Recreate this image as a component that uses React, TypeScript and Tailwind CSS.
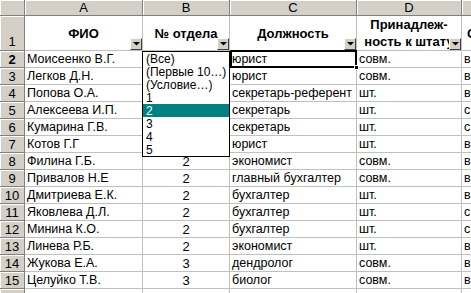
import React from 'react';

// rows 2..15; the № отдела values of rows 2-7 lie under the open filter list
const ROWS: [string, string, string, string, string][] = [
  ['Моисеенко В.Г.', '', 'юрист', 'совм.', 'в'],
  ['Легков Д.Н.', '', 'юрист', 'совм.', 'в'],
  ['Попова О.А.', '', 'секретарь-референт', 'шт.', 'в'],
  ['Алексеева И.П.', '', 'секретарь', 'шт.', 'с'],
  ['Кумарина Г.В.', '', 'секретарь', 'шт.', 'с'],
  ['Котов Г.Г', '', 'юрист', 'шт.', 'в'],
  ['Филина Г.Б.', '2', 'экономист', 'совм.', 'в'],
  ['Привалов Н.Е', '2', 'главный бухгалтер', 'совм.', 'в'],
  ['Дмитриева Е.К.', '2', 'бухгалтер', 'шт.', 'в'],
  ['Яковлева Д.Л.', '2', 'бухгалтер', 'шт.', 'с'],
  ['Минина К.О.', '2', 'бухгалтер', 'шт.', 'с'],
  ['Линева Р.Б.', '2', 'экономист', 'шт.', 'в'],
  ['Жукова Е.А.', '3', 'дендролог', 'совм.', 'в'],
  ['Целуйко Т.В.', '3', 'биолог', 'совм.', 'в'],
];

const FILTER_ITEMS = ['(Все)', '(Первые 10…)', '(Условие…)', '1', '2', '3', '4', '5'];

const head = 'bg-[#d4d0c8] border-r border-b border-[#808080] shadow-[inset_1px_1px_0_#fff] flex items-center justify-center text-[13px]';
const cell = 'border-r border-b border-[#c0c0c0] flex items-center pl-[2px] whitespace-nowrap overflow-hidden text-[12.5px]';

const FilterButton = () => (
  <div className="absolute right-0 bottom-0 w-[12px] h-[12px] bg-[#d4d0c8] border-t border-l border-t-white border-l-white border-r border-b border-r-[#404040] border-b-[#404040] flex items-center justify-center">
    <svg width="7" height="4" viewBox="0 0 7 4">
      <path d="M0 0h7L3.5 3.5z" fill="#000" />
    </svg>
  </div>
);

export default function App() {
  return (
    <div className="relative w-[471px] h-[293px] overflow-hidden bg-white text-black leading-none" style={{ fontFamily: '"Liberation Sans", Arial, sans-serif' }}>
      <div className="grid grid-cols-[25px_118px_87px_127px_105px_80px] grid-rows-[16px_35px_repeat(15,17px)]">
        {/* column letters */}
        <div className={head} />
        {['A', 'B', 'C', 'D', 'E'].map((l) => (
          <div key={l} className={head}>{l}</div>
        ))}

        {/* row 1: headers */}
        <div className={`${head} !items-end pb-[2px]`}>1</div>
        <div className={`${cell} relative justify-center font-bold !pl-0 !text-[13px]`}>
          ФИО
          <FilterButton />
        </div>
        <div className={`${cell} relative justify-center font-bold !pl-0 !text-[13px]`}>
          № отдела
          <FilterButton />
        </div>
        <div className={`${cell} relative justify-center font-bold !pl-0 !text-[13px]`}>
          Должность
          <FilterButton />
        </div>
        <div className={`${cell} relative justify-center font-bold !pl-0 !text-[13px] text-center leading-[17px] whitespace-normal`}>
          <span>Принадлеж-<br />ность к штату</span>
          <FilterButton />
        </div>
        <div className={`${cell} font-bold !pl-[5px] !text-[13px]`}>Образование</div>

        {ROWS.map((r, i) => (
          <React.Fragment key={i}>
            <div className={`${head} ${i === 0 ? 'font-bold' : ''}`}>{i + 2}</div>
            <div className={cell}>{r[0]}</div>
            <div className={`${cell} justify-center !pl-0 !text-[13px]`}>{r[1]}</div>
            <div className={`${cell} ${i === 0 ? 'relative overflow-visible' : ''}`}>
              {r[2]}
              {i === 0 && (
                <div className="absolute left-0 top-[-1px] w-[127px] h-[18px] border-[2px] border-black">
                  <div className="absolute right-[-4px] bottom-[-4px] w-[5px] h-[5px] bg-black border border-white" />
                </div>
              )}
            </div>
            <div className={cell}>{r[3]}</div>
            <div className={cell}>{r[4]}</div>
          </React.Fragment>
        ))}

        {/* row 16, only its top shows */}
        <div className={head} />
        <div className={cell} />
        <div className={cell} />
        <div className={cell} />
        <div className={cell} />
        <div className={cell} />
      </div>

      {/* autofilter dropdown list */}
      <div className="absolute left-[142px] top-[51px] w-[88px] h-[106px] bg-white border border-black text-[12px]">
        {FILTER_ITEMS.map((item) => (
          <div
            key={item}
            className={`h-[13px] flex items-center pl-[3px] whitespace-nowrap ${item === '2' ? 'bg-[#008080] text-white' : ''}`}
          >
            {item}
          </div>
        ))}
      </div>
    </div>
  );
}
